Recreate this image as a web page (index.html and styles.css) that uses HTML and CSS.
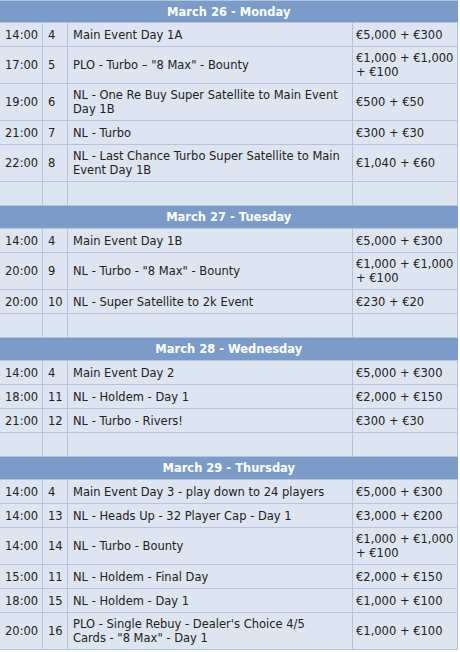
FILE: index.html
```html
<!DOCTYPE html>
<html>
<head>
<meta charset="utf-8">
<link rel="stylesheet" href="styles.css">
</head>
<body>
<table class="sched">
<colgroup><col class="c-time"><col class="c-num"><col class="c-event"><col class="c-buy"></colgroup>
<tbody>
<tr class="day"><th colspan="4">March 26 - Monday</th></tr>
<tr><td>14:00</td><td>4</td><td>Main Event Day 1A</td><td>€5,000 + €300</td></tr>
<tr class="tall"><td>17:00</td><td>5</td><td>PLO - Turbo – "8 Max" - Bounty</td><td>€1,000 + €1,000 + €100</td></tr>
<tr class="tall"><td>19:00</td><td>6</td><td>NL - One Re Buy Super Satellite to Main Event Day 1B</td><td>€500 + €50</td></tr>
<tr><td>21:00</td><td>7</td><td>NL - Turbo</td><td>€300 + €30</td></tr>
<tr class="tall"><td>22:00</td><td>8</td><td>NL - Last Chance Turbo Super Satellite to Main Event Day 1B</td><td>€1,040 + €60</td></tr>
<tr class="blank"><td>&nbsp;</td><td>&nbsp;</td><td>&nbsp;</td><td>&nbsp;</td></tr>
<tr class="day"><th colspan="4">March 27 - Tuesday</th></tr>
<tr><td>14:00</td><td>4</td><td>Main Event Day 1B</td><td>€5,000 + €300</td></tr>
<tr class="tall"><td>20:00</td><td>9</td><td>NL - Turbo - "8 Max" - Bounty</td><td>€1,000 + €1,000 + €100</td></tr>
<tr><td>20:00</td><td>10</td><td>NL - Super Satellite to 2k Event</td><td>€230 + €20</td></tr>
<tr class="blank"><td>&nbsp;</td><td>&nbsp;</td><td>&nbsp;</td><td>&nbsp;</td></tr>
<tr class="day"><th colspan="4">March 28 - Wednesday</th></tr>
<tr><td>14:00</td><td>4</td><td>Main Event Day 2</td><td>€5,000 + €300</td></tr>
<tr><td>18:00</td><td>11</td><td>NL - Holdem - Day 1</td><td>€2,000 + €150</td></tr>
<tr><td>21:00</td><td>12</td><td>NL - Turbo - Rivers!</td><td>€300 + €30</td></tr>
<tr class="blank"><td>&nbsp;</td><td>&nbsp;</td><td>&nbsp;</td><td>&nbsp;</td></tr>
<tr class="day"><th colspan="4">March 29 - Thursday</th></tr>
<tr><td>14:00</td><td>4</td><td>Main Event Day 3 - play down to 24 players</td><td>€5,000 + €300</td></tr>
<tr><td>14:00</td><td>13</td><td>NL - Heads Up - 32 Player Cap - Day 1</td><td>€3,000 + €200</td></tr>
<tr class="tall"><td>14:00</td><td>14</td><td>NL - Turbo - Bounty</td><td>€1,000 + €1,000 + €100</td></tr>
<tr><td>15:00</td><td>11</td><td>NL - Holdem - Final Day</td><td>€2,000 + €150</td></tr>
<tr><td>18:00</td><td>15</td><td>NL - Holdem - Day 1</td><td>€1,000 + €100</td></tr>
<tr class="tall"><td>20:00</td><td>16</td><td>PLO - Single Rebuy - Dealer's Choice 4/5<br>Cards - "8 Max" - Day 1</td><td>€1,000 + €100</td></tr>
</tbody>
</table>
</body>
</html>
```
FILE: styles.css
```css
html, body {
  margin: 0;
  padding: 0;
  background: #ffffff;
}
body {
  font-family: "DejaVu Sans", Verdana, sans-serif;
  font-size: 11.5px;
  color: #222222;
}
.sched {
  border-collapse: collapse;
  width: 458px;
  table-layout: fixed;
  margin-left: -1px;
}
.c-time { width: 43px; }
.c-num { width: 25px; }
.c-event { width: 285px; }
.c-buy { width: 105px; }
.sched td {
  background: #dde5f1;
  border: 1px solid #b3c4dc;
  padding: 4px 3px 4px 5px;
  line-height: 14px;
  vertical-align: middle;
  height: 15px;
}
.sched td:last-child {
  padding: 4px 0 4px 3px;
}
.sched .day th {
  background: #7b9bc8;
  color: #ffffff;
  font-weight: bold;
  text-align: center;
  font-size: 11.5px;
  height: 22px;
  padding: 0;
  border: 1px solid #b3c4dc;
  border-right: none;
}
.sched .day:first-child th {
  height: 21px;
}
.sched .blank td {
  height: 15px;
}
```
